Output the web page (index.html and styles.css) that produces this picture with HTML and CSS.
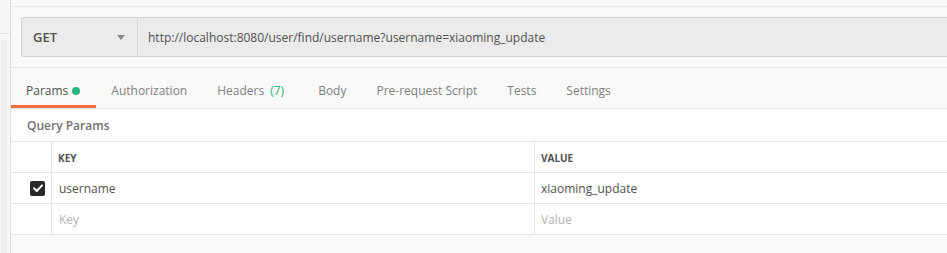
FILE: index.html
```html
<!DOCTYPE html>
<html lang="en">
<head>
    <meta charset="UTF-8">
    <title>Request - Params</title>
    <link rel="stylesheet" href="styles.css">
</head>
<body>
    <div class="app">
        <aside class="side">
            <div class="side-top"></div>
            <div class="side-thumb"></div>
        </aside>

        <main class="main">
            <div class="top-strip"></div>

            <div class="request-row">
                <div class="url-bar">
                    <div class="method">
                        <span>GET</span>
                        <span class="caret"></span>
                    </div>
                    <div class="url">http://localhost:8080/user/find/username?username=xiaoming_update</div>
                </div>
            </div>

            <nav class="tabs">
                <a class="tab active">Params <span class="dot"></span></a>
                <a class="tab">Authorization</a>
                <a class="tab headers">Headers <span class="count">(7)</span></a>
                <a class="tab">Body</a>
                <a class="tab">Pre-request Script</a>
                <a class="tab">Tests</a>
                <a class="tab">Settings</a>
            </nav>

            <section class="params">
                <h3 class="params-title">Query Params</h3>
                <div class="table">
                    <div class="row head">
                        <div class="cell check"></div>
                        <div class="cell key">KEY</div>
                        <div class="cell value">VALUE</div>
                    </div>
                    <div class="row">
                        <div class="cell check">
                            <span class="checkbox">
                                <svg width="10" height="8" viewBox="0 0 10 8"><path d="M1 4.2 L3.8 7 L9 1.4" fill="none" stroke="#fff" stroke-width="2" stroke-linecap="round" stroke-linejoin="round"/></svg>
                            </span>
                        </div>
                        <div class="cell key">username</div>
                        <div class="cell value">xiaoming_update</div>
                    </div>
                    <div class="row">
                        <div class="cell check"></div>
                        <div class="cell key placeholder">Key</div>
                        <div class="cell value placeholder">Value</div>
                    </div>
                </div>
            </section>
        </main>
    </div>
</body>
</html>
```

FILE: styles.css
```css
:root {
    --text-dark: #505050;
    --text-muted: #808080;
    --line: #e6e6e6;
    --accent-orange: #f26b3a;
    --accent-green: #26b47f;
    --bg-light: #f9f9f9;
}

* {
    margin: 0;
    padding: 0;
    box-sizing: border-box;
    font-family: 'Open Sans', sans-serif;
}

body {
    background-color: var(--bg-light);
    width: 947px;
    height: 253px;
    overflow: hidden;
}

.app {
    display: flex;
    height: 253px;
}

.side {
    width: 11px;
    border-right: 1px solid #e0e0e0;
    background-color: #f7f7f7;
    flex-shrink: 0;
}

.side-top {
    height: 34px;
    border-bottom: 1px solid #e3e3e3;
}

.side-thumb {
    width: 6px;
    height: 220px;
    margin: 6px 0 0 1px;
    background-color: #eeeeee;
    border-radius: 3px 3px 0 0;
}

.main {
    flex: 1;
    display: flex;
    flex-direction: column;
}

.top-strip {
    height: 7px;
    border-bottom: 1px solid #e8e8e8;
}

.request-row {
    padding: 10px 0 10px 10px;
    border-bottom: 1px solid #e6e6e6;
}

.url-bar {
    display: flex;
    height: 40px;
    background-color: #ebebeb;
    border: 1px solid #d2d2d2;
    border-right: none;
    border-radius: 3px 0 0 3px;
}

.method {
    width: 116px;
    display: flex;
    align-items: center;
    justify-content: space-between;
    padding: 0 12px 0 11px;
    border-right: 1px solid #d6d6d6;
    color: var(--text-dark);
    font-size: 13px;
    font-weight: 600;
}

.caret {
    width: 0;
    height: 0;
    border-left: 4px solid transparent;
    border-right: 4px solid transparent;
    border-top: 5px solid #888888;
}

.url {
    display: flex;
    align-items: center;
    padding-left: 10px;
    color: var(--text-dark);
    font-size: 12px;
}

.tabs {
    display: flex;
    height: 41px;
    border-bottom: 1px solid #e6e6e6;
}

.tab {
    display: flex;
    align-items: center;
    gap: 5px;
    padding: 8px 15px 0;
    color: var(--text-muted);
    font-size: 12px;
    white-space: nowrap;
    border-bottom: 3px solid transparent;
}

.tab.active {
    color: var(--text-dark);
    border-bottom-color: var(--accent-orange);
    padding-right: 16px;
}

.tab.headers {
    padding-right: 19px;
}

.dot {
    width: 8px;
    height: 8px;
    border-radius: 50%;
    background-color: var(--accent-green);
    margin-left: -1px;
}

.count {
    color: var(--accent-green);
    margin-left: 1px;
}

.params {
    background-color: #ffffff;
}

.params-title {
    height: 33px;
    display: flex;
    align-items: center;
    padding-left: 16px;
    color: #707070;
    font-size: 12px;
    font-weight: 600;
    border-bottom: 1px solid var(--line);
}

.row {
    display: flex;
    height: 31px;
    border-bottom: 1px solid var(--line);
}

.cell {
    display: flex;
    align-items: center;
    font-size: 12px;
    color: var(--text-dark);
}

.check {
    width: 41px;
    justify-content: flex-end;
    padding-right: 6px;
    border-right: 1px solid var(--line);
    flex-shrink: 0;
}

.key {
    width: 483px;
    padding-left: 7px;
    border-right: 1px solid var(--line);
    flex-shrink: 0;
}

.value {
    flex: 1;
    padding-left: 6px;
}

.head .cell {
    font-size: 10px;
    font-weight: 700;
    padding-top: 1px;
}

.head .key {
    padding-left: 6px;
}

.placeholder {
    color: #b3b3b3;
}

.checkbox {
    width: 15px;
    height: 15px;
    border-radius: 2px;
    background-color: #282828;
    display: flex;
    align-items: center;
    justify-content: center;
}
```
